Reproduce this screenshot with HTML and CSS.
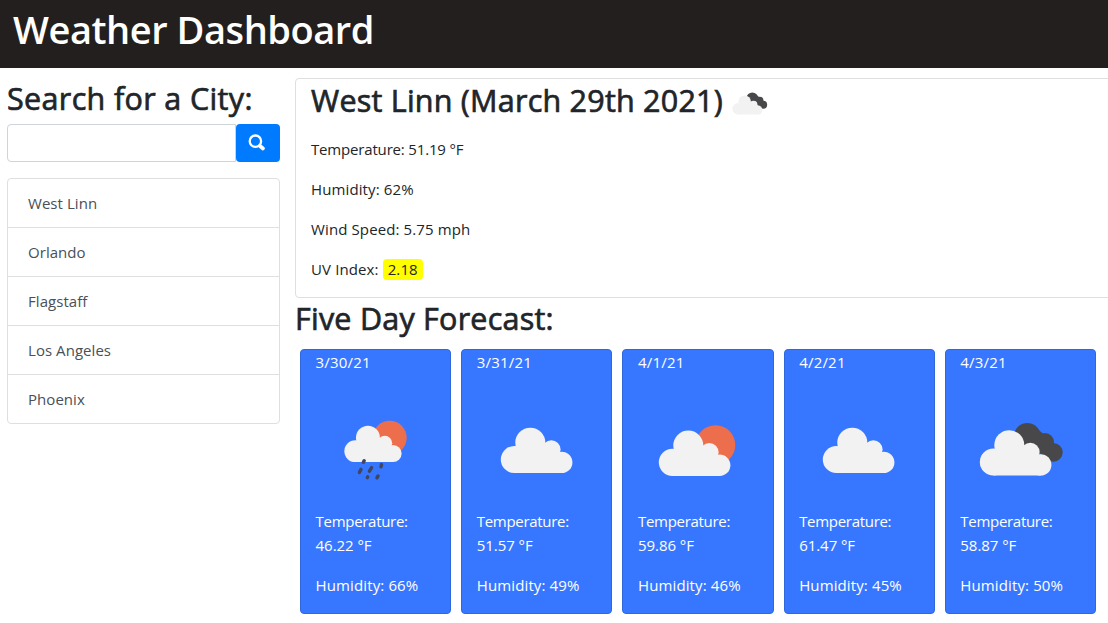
FILE: index.html
```html
<!DOCTYPE html>
<html lang="en">
<head>
<meta charset="utf-8">
<title>Weather Dashboard</title>
<link rel="stylesheet" href="styles.css">
</head>
<body>
<svg class="defs" width="0" height="0" aria-hidden="true">
  <symbol id="cloud" viewBox="0 0 119 119">
    <g fill="#f2f2f2"><circle cx="37.4" cy="68.5" r="13.6"/><circle cx="53.3" cy="51.7" r="15"/><circle cx="74.3" cy="58.5" r="9.3"/><circle cx="84.7" cy="71.4" r="10.7"/><path d="M38 58L53 50L74 56L85 66V82.1H37.4Z"/></g>
  </symbol>
  <symbol id="sun-cloud" viewBox="0 0 119 119">
    <circle cx="77.5" cy="54" r="19.8" fill="#ec6e4c"/>
    <use href="#cloud" x="-3" y="2.8" width="119" height="119"/>
  </symbol>
  <symbol id="dark-cloud" viewBox="0 0 119 119">
    <g fill="#48484a"><circle cx="67.3" cy="45.5" r="13.5"/><circle cx="85" cy="51" r="9"/><circle cx="93.3" cy="61.3" r="9.4"/><path d="M64 50L72 34L85 44L93 60L90 70Z"/></g>
    <use href="#cloud" x="-4" y="2.5" width="119" height="119"/>
  </symbol>
  <symbol id="rain" viewBox="0 0 119 119">
    <circle cx="73.7" cy="46.7" r="17" fill="#ec6e4c"/>
    <use href="#cloud" x="9.3" y="5.4" width="95.2" height="95.2"/>
    <g stroke="#3f4660" stroke-width="3.4" stroke-linecap="round"><path d="M48.2 69.7L47.3 71.3M45 78.4L43.4 81.4M55.6 76.6L53.4 80.2M65.5 73.6L65 75.8M51.7 85.9L51.3 86.6M62 85L60.9 86.8"/></g>
  </symbol>
</svg>
<header class="topbar"><h1 class="title">Weather Dashboard</h1></header>
<div class="layout">
  <aside class="sidebar">
    <h2 class="heading search-title">Search for a City:</h2>
    <form class="search">
      <input class="search-input" type="text" aria-label="City">
      <button class="search-btn" type="button" aria-label="Search">
        <svg width="18" height="18" viewBox="0 0 18 18" fill="none" stroke="#fff"><circle cx="7.4" cy="7.2" r="5.7" stroke-width="2.3"/><path d="M12 12L15 14.4" stroke-width="3.8" stroke-linecap="round"/></svg>
      </button>
    </form>
    <ul class="cities">
      <li class="city">West Linn</li>
      <li class="city">Orlando</li>
      <li class="city">Flagstaff</li>
      <li class="city">Los Angeles</li>
      <li class="city">Phoenix</li>
    </ul>
  </aside>
  <main class="main">
    <section class="current">
      <h2 class="heading current-title"><span class="place">West Linn (March 29th 2021)</span><svg class="current-icon"><use href="#dark-cloud"/></svg></h2>
      <p class="line temp">Temperature: 51.19 °F</p>
      <p class="line">Humidity: 62%</p>
      <p class="line">Wind Speed: 5.75 mph</p>
      <p class="line">UV Index: <span class="uv">2.18</span></p>
    </section>
    <h2 class="heading forecast-title">Five Day Forecast:</h2>
    <section class="cards">
      <article class="card"><p class="date">3/30/21</p><svg class="icon"><use href="#rain"/></svg><p class="line temp">Temperature: <span class="value">46.22 °F</span></p><p class="line">Humidity: 66%</p></article>
      <article class="card"><p class="date">3/31/21</p><svg class="icon"><use href="#cloud"/></svg><p class="line temp">Temperature: <span class="value">51.57 °F</span></p><p class="line">Humidity: 49%</p></article>
      <article class="card"><p class="date">4/1/21</p><svg class="icon"><use href="#sun-cloud"/></svg><p class="line temp">Temperature: <span class="value">59.86 °F</span></p><p class="line">Humidity: 46%</p></article>
      <article class="card"><p class="date">4/2/21</p><svg class="icon"><use href="#cloud"/></svg><p class="line temp">Temperature: <span class="value">61.47 °F</span></p><p class="line">Humidity: 45%</p></article>
      <article class="card"><p class="date">4/3/21</p><svg class="icon"><use href="#dark-cloud"/></svg><p class="line temp">Temperature: <span class="value">58.87 °F</span></p><p class="line">Humidity: 50%</p></article>
    </section>
  </main>
</div>
</body>
</html>
```
FILE: styles.css
```css
* { box-sizing: border-box; }
body {
  margin: 0;
  height: 623px;
  overflow: hidden;
  background: #fff;
  color: #212529;
  font: 15px/24px "Open Sans", "Noto Sans", sans-serif;
}
h1, h2, p, ul { margin: 0; padding: 0; }
.defs { display: block; height: 0; }
.topbar { height: 68px; padding: 5px 0 0 13px; background: #231f1e; }
.title { color: #fff; font-size: 38px; line-height: 48px; font-weight: 600; letter-spacing: -0.45px; white-space: nowrap; }
.layout { display: flex; gap: 15px; padding: 10px 0 0 7px; }
.sidebar { width: 273px; flex: none; }
.heading {
  font-size: 30.5px; line-height: 38px; font-weight: 400; white-space: nowrap;
  letter-spacing: 0.23px; -webkit-text-stroke: 0.7px #212529;
}
.search-title { padding-top: 1px; height: 46px; letter-spacing: 0.35px; }
.search { display: flex; height: 38px; }
.search-input {
  width: 229px; height: 38px;
  border: 1px solid #ced4da; border-radius: 4px 0 0 4px; background: #fff;
}
.search-btn {
  display: flex; align-items: flex-start;
  width: 44px; height: 38px; padding: 10px 0 0 12px;
  border: 0; border-radius: 4px; background: #007bff;
}
.cities { margin-top: 16px; list-style: none; border: 1px solid #dfdfdf; border-radius: 4px; }
.city { height: 49px; padding: 12px 20px; color: #495057; border-bottom: 1px solid #dfdfdf; letter-spacing: 0.05px; }
.city:last-child { height: 48px; border-bottom: 0; }
.main { width: 830px; flex: none; }
.current { height: 220px; padding: 0 15px; border: 1px solid #dfdfdf; border-radius: 4px; }
.current-title { display: flex; height: 58px; padding-top: 2px; }
.place { width: 413px; }
.current-icon { width: 50px; height: 50px; margin-top: -2px; }
.line { margin-bottom: 16px; letter-spacing: 0.12px; }
.temp { letter-spacing: -0.17px; }
.uv { padding: 0 5px 1px; border-radius: 4px; background: #ff0; }
.forecast-title { height: 51px; padding-top: 1px; }
.cards { display: grid; grid-template-columns: repeat(5, 151.2px); gap: 10px; padding-left: 5px; }
.card {
  height: 265px; padding: 0 14px 0 14.6px;
  border: 1px solid #3068dc; border-radius: 4px;
  background: #3777ff; color: #fff;
}
.card .temp { letter-spacing: -0.3px; }
.card .value { letter-spacing: -0.05px; }
.date { letter-spacing: 0.2px; }
.icon { display: block; width: 119px; height: 119px; margin: 17px 0 -1px; }
```
